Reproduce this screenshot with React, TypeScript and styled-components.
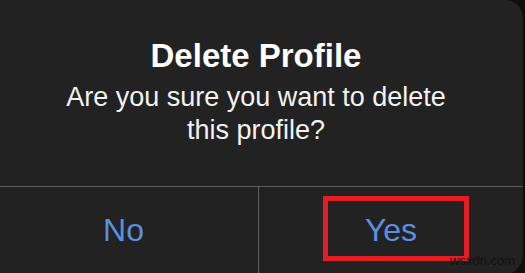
import React from "react";
import styled, { createGlobalStyle } from "styled-components";

const Global = createGlobalStyle`
  html, body {
    margin: 0;
    padding: 0;
    width: 525px;
    height: 273px;
    overflow: hidden;
    background: #0e0e0e;
  }
  * { box-sizing: border-box; }
`;

const Page = styled.div`
  position: relative;
  width: 525px;
  height: 273px;
  overflow: hidden;
  font-family: "Liberation Sans", Arial, sans-serif;
`;

const Dialog = styled.div`
  width: 534px;
  height: 276px;
  margin-left: -11px;
  background: #222222;
  border-top-right-radius: 18px;
  border-bottom-right-radius: 22px;
  display: flex;
  flex-direction: column;
  overflow: hidden;
`;

const Content = styled.div`
  height: 187px;
  padding-top: 36px;
  display: flex;
  flex-direction: column;
  align-items: center;
  border-bottom: 1px solid #5e5e5e;
`;

const Title = styled.h1`
  margin: 0;
  font-size: 33px;
  line-height: 40px;
  font-weight: 700;
  color: #ffffff;
`;

const Message = styled.p`
  margin: 5px 0 0;
  font-size: 27px;
  line-height: 33px;
  color: #f2f2f2;
  text-align: center;
  width: 400px;
`;

const Actions = styled.div`
  flex: 1;
  display: grid;
  grid-template-columns: 270px 1fr;
`;

const ActionButton = styled.button<{ $divider?: boolean }>`
  position: relative;
  margin: 0;
  padding: 0 0 2px;
  border: none;
  border-right: ${(p) => (p.$divider ? "1px solid #5e5e5e" : "none")};
  background: transparent;
  color: #5b8fe0;
  font-family: "Liberation Sans", Arial, sans-serif;
  font-size: 32px;
  display: flex;
  align-items: center;
  justify-content: center;
  cursor: pointer;
`;

const Highlight = styled.span`
  position: absolute;
  left: 64px;
  top: 9px;
  width: 146px;
  height: 65px;
  border: 5px solid #e31e27;
  pointer-events: none;
`;

const Watermark = styled.span`
  position: absolute;
  left: 450px;
  top: 253px;
  font-family: "Liberation Sans", Arial, sans-serif;
  font-size: 13px;
  color: #111111;
`;

export default function App() {
  return (
    <>
      <Global />
      <Page>
        <Dialog>
          <Content>
            <Title>Delete Profile</Title>
            <Message>Are you sure you want to delete this profile?</Message>
          </Content>
          <Actions>
            <ActionButton $divider>No</ActionButton>
            <ActionButton>
              Yes
              <Highlight />
            </ActionButton>
          </Actions>
        </Dialog>
        <Watermark>wsxdn.com</Watermark>
      </Page>
    </>
  );
}
